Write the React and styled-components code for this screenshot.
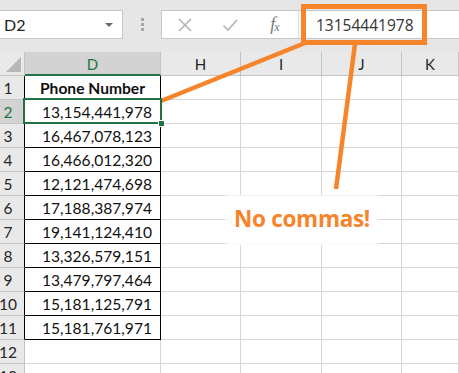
import React from 'react';
import styled, { createGlobalStyle } from 'styled-components';

const ORANGE = '#f5842b';
const GREEN = '#217346';
const GRID = '#d6d6d6';
const HEAD_LINE = '#c4c4c4';

const Global = createGlobalStyle`
  html, body { margin: 0; padding: 0; background: #fff; }
  body { font-family: Lato, "Liberation Sans", sans-serif; }
`;

const Page = styled.div`
  position: relative;
  width: 459px;
  height: 373px;
  overflow: hidden;
  background: #fff;
`;

const TopBar = styled.div`
  height: 52px;
  box-sizing: border-box;
  padding-top: 10px;
  background: #e6e6e6;
  display: flex;
  align-items: flex-start;
`;

const NameBox = styled.div`
  width: 123px;
  height: 29px;
  box-sizing: border-box;
  background: #fff;
  border: 1px solid #c6c6c6;
  border-left: none;
  display: flex;
  align-items: center;
  justify-content: space-between;
  padding: 0 9px 0 4px;
  font-size: 16px;
  color: #222;
`;

const Caret = styled.span`
  width: 0;
  height: 0;
  border-left: 4px solid transparent;
  border-right: 4px solid transparent;
  border-top: 4px solid #6a6a6a;
`;

const Grip = styled.div`
  width: 38px;
  display: flex;
  flex-direction: column;
  align-items: center;
  gap: 2px;
  padding-top: 8px;
`;

const Dot = styled.span`
  width: 3px;
  height: 3px;
  background: #a6a6a6;
`;

const FormulaBar = styled.div`
  flex: 1;
  height: 29px;
  box-sizing: border-box;
  background: #fff;
  border: 1px solid #c6c6c6;
  border-right: none;
  display: flex;
  align-items: center;
`;

const Buttons = styled.div`
  width: 136px;
  height: 100%;
  display: flex;
  align-items: center;
  border-right: 1px solid #dcdcdc;
`;

const Btn = styled.div`
  width: 45px;
  display: flex;
  align-items: center;
  justify-content: center;
  color: ${p => p.$color || '#b3b3b3'};
`;

const Fx = styled.span`
  font-family: "Liberation Serif", serif;
  font-style: italic;
  font-size: 18px;
  color: #7a7a7a;
  letter-spacing: -1px;
  sub { font-size: 12px; vertical-align: -1px; }
`;

const Input = styled.div`
  flex: 1;
  padding-left: 17px;
  font-family: "Open Sans", "Liberation Sans", sans-serif;
  font-size: 15.5px;
  color: #333;
`;

const Sheet = styled.div`
  display: grid;
  grid-template-columns: 25px 136px 80px 81px 80px 1fr;
  grid-auto-rows: 24px;
`;

const Corner = styled.div`
  position: relative;
  background: #e9e9e9;
  border-right: 1px solid ${HEAD_LINE};
  border-bottom: 1px solid ${HEAD_LINE};
  box-sizing: border-box;
  &::after {
    content: '';
    position: absolute;
    right: 3px;
    bottom: 3px;
    width: 0;
    height: 0;
    border-left: 15px solid transparent;
    border-bottom: 15px solid #b7b7b7;
  }
`;

const ColHead = styled.div`
  box-sizing: border-box;
  background: ${p => (p.$active ? '#d3d3d3' : '#e9e9e9')};
  color: ${p => (p.$active ? GREEN : '#262626')};
  border-right: 1px solid ${HEAD_LINE};
  border-bottom: ${p => (p.$active ? `2px solid ${GREEN}` : `1px solid ${HEAD_LINE}`)};
  display: flex;
  align-items: center;
  justify-content: center;
  font-size: 15px;
  padding-top: 1px;
`;

const RowHead = styled.div`
  box-sizing: border-box;
  background: ${p => (p.$active ? '#d3d3d3' : '#e9e9e9')};
  color: ${p => (p.$active ? GREEN : '#262626')};
  border-right: 1px solid ${p => (p.$edge ? '#000' : HEAD_LINE)};
  border-bottom: 1px solid ${HEAD_LINE};
  display: flex;
  align-items: center;
  justify-content: center;
  padding-right: 8px;
  font-size: 15.5px;
`;

const Cell = styled.div`
  position: relative;
  box-sizing: border-box;
  border-right: 1px solid ${p => (p.$edge ? '#000' : GRID)};
  border-bottom: 1px solid ${p => (p.$edge ? '#000' : GRID)};
  display: flex;
  align-items: center;
  justify-content: ${p => (p.$align === 'center' ? 'center' : 'flex-end')};
  padding-right: ${p => (p.$align === 'center' ? '0' : '8px')};
  font-size: 15.6px;
  font-weight: ${p => (p.$bold ? 700 : 400)};
  color: #111;
  z-index: ${p => (p.$selected ? 2 : 0)};
  ${p =>
    p.$selected &&
    `
    &::before {
      content: '';
      position: absolute;
      left: -2px; top: -2px; right: -2px; bottom: -1px;
      border: 2px solid ${GREEN};
    }
    &::after {
      content: '';
      position: absolute;
      right: -5px; bottom: -4px;
      width: 5px; height: 5px;
      background: ${GREEN};
      border: 1px solid #fff;
    }
  `}
`;

const HighlightBox = styled.div`
  position: absolute;
  left: 301px;
  top: 4px;
  width: 126px;
  height: 41px;
  box-sizing: border-box;
  border: 5px solid ${ORANGE};
`;

const Lines = styled.svg`
  position: absolute;
  inset: 0;
  pointer-events: none;
`;

const Callout = styled.div`
  position: absolute;
  left: 228px;
  top: 197px;
  width: 148px;
  height: 46px;
  background: #fff;
  box-shadow: 0 0 3px 2px #fff;
  display: flex;
  align-items: center;
  justify-content: center;
  white-space: nowrap;
  font-family: "Open Sans", "Liberation Sans", sans-serif;
  font-weight: 700;
  font-size: 22.5px;
  letter-spacing: -0.3px;
  color: ${ORANGE};
  padding-bottom: 4px;
  box-sizing: border-box;
`;

const numbers = [
  '13,154,441,978',
  '16,467,078,123',
  '16,466,012,320',
  '12,121,474,698',
  '17,188,387,974',
  '19,141,124,410',
  '13,326,579,151',
  '13,479,797,464',
  '15,181,125,791',
  '15,181,761,971',
];

const cols = ['D', 'H', 'I', 'J', 'K'];

export default function App() {
  const rows = [];
  for (let r = 1; r <= 13; r++) {
    const inTable = r <= 11;
    let content = '';
    if (r === 1) content = 'Phone Number';
    else if (r <= 11) content = numbers[r - 2];
    rows.push(
      <React.Fragment key={r}>
        <RowHead $active={r === 2} $edge={inTable}>{r}</RowHead>
        <Cell
          $edge={inTable}
          $bold={r === 1}
          $align={r === 1 ? 'center' : 'right'}
          $selected={r === 2}
        >
          {content}
        </Cell>
        <Cell />
        <Cell />
        <Cell />
        <Cell />
      </React.Fragment>
    );
  }

  return (
    <Page>
      <Global />
      <TopBar>
        <NameBox>
          <span>D2</span>
          <Caret />
        </NameBox>
        <Grip>
          <Dot />
          <Dot />
          <Dot />
        </Grip>
        <FormulaBar>
          <Buttons>
            <Btn>
              <svg width="16" height="16" viewBox="0 0 16 16">
                <path d="M2 2 L14 14 M14 2 L2 14" stroke="currentColor" strokeWidth="1.6" fill="none" />
              </svg>
            </Btn>
            <Btn>
              <svg width="16" height="16" viewBox="0 0 16 16">
                <path d="M1.5 8.5 L6 13 L15 3" stroke="currentColor" strokeWidth="1.6" fill="none" />
              </svg>
            </Btn>
            <Btn>
              <Fx>f<sub>x</sub></Fx>
            </Btn>
          </Buttons>
          <Input>13154441978</Input>
        </FormulaBar>
      </TopBar>
      <Sheet>
        <Corner />
        {cols.map(c => (
          <ColHead key={c} $active={c === 'D'}>{c}</ColHead>
        ))}
        {rows}
      </Sheet>
      <Lines width="459" height="373" viewBox="0 0 459 373">
        <line x1="161" y1="101" x2="305" y2="43" stroke={ORANGE} strokeWidth="4.5" />
        <line x1="355" y1="44" x2="336" y2="189" stroke={ORANGE} strokeWidth="4.5" />
      </Lines>
      <HighlightBox />
      <Callout>No commas!</Callout>
    </Page>
  );
}
